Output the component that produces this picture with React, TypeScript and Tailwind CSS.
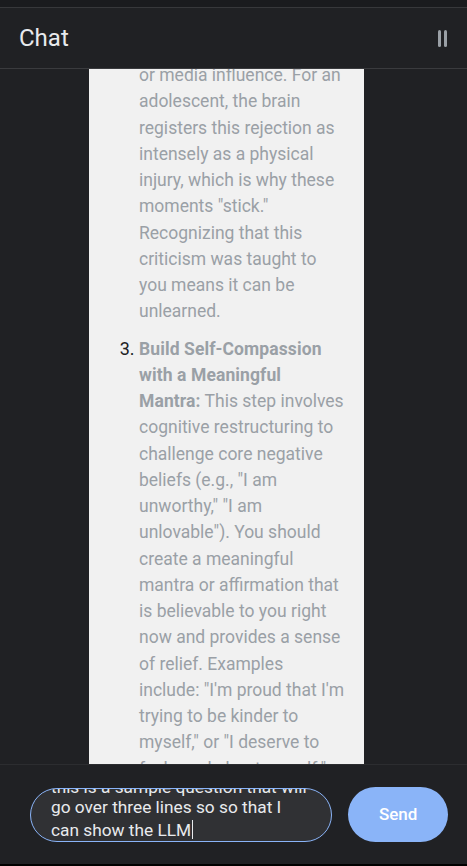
import React from 'react';

export default function App() {
    return (
        <div className="h-[866px] w-full bg-black" style={{ fontFamily: 'Roboto, "Noto Sans", sans-serif' }}>
            <div className="flex h-[864px] flex-col bg-[#202124]">
                {/* Top strip */}
                <div className="h-[8px] shrink-0 border-b border-[#37383b] bg-[#1a1b1e]" />

                {/* Header */}
                <div className="flex h-[61px] shrink-0 items-center justify-between border-b border-[#3a3b3e] pl-[19px] pr-[20px]">
                    <h1 className="text-[24px] font-normal text-[#e8eaed]">Chat</h1>
                    <div className="flex gap-[3px]">
                        <span className="h-[17px] w-[3px] rounded-sm bg-[#9aa0a6]" />
                        <span className="h-[17px] w-[3px] rounded-sm bg-[#9aa0a6]" />
                    </div>
                </div>

                {/* Messages (scrolled) */}
                <div className="min-h-0 flex-1 overflow-hidden">
                    <div className="ml-[89px] w-[275px] bg-[#f1f1f1] pl-[10px] pr-[18px] pb-6 -mt-[113px]">
                        <ol start={2} className="list-decimal pl-[40px] text-[17.5px] leading-[1.5] text-[#9aa0a6] marker:text-[#202124] marker:text-[18px]">
                            <li className="mb-[10px]">
                                <span className="block">
                                    <strong className="font-bold tracking-[0.1px]">Understand the Roots:</strong> Much of
                                    this voice comes from early criticism by parents, teachers, peers,
                                </span>
                                or media influence. For an adolescent, the brain registers this rejection as intensely
                                as a physical injury, which is why these moments "stick." Recognizing that this
                                criticism was taught to you means it can be unlearned.
                            </li>
                            <li className="mb-[10px]">
                                <strong className="font-bold tracking-[0.1px]">Build Self-Compassion with a Meaningful Mantra:</strong>{' '}
                                This step involves cognitive restructuring to challenge core negative beliefs (e.g., "I
                                am unworthy," "I am unlovable"). You should create a meaningful mantra or affirmation
                                that is believable to you right now and provides a sense of relief. Examples include:
                                "I'm proud that I'm trying to be kinder to myself," or "I deserve to feel good about
                                myself."
                            </li>
                            <li className="mb-[10px]">
                                <strong className="font-bold tracking-[0.1px]">Practice Daily:</strong> Repeat your mantra
                                whenever the critical voice shows up, and notice how it slowly loses its power over time.
                            </li>
                        </ol>
                    </div>
                </div>

                {/* Composer */}
                <div className="flex h-[100px] shrink-0 items-center gap-[16px] border-t border-[#2c2d30] pl-[30px] pr-[19px]">
                    <div className="flex h-[54px] w-[303px] flex-col justify-end overflow-hidden rounded-[27px] border border-[#8ab4f8] bg-[#303134] pb-[1px] pl-[20px] pr-[22px]">
                        <p className="text-[17.3px] leading-[20px] text-[#e8eaed]">
                            this is a sample question that will go over three lines so so that I can show the LLM
                            <span className="ml-[1px] inline-block h-[19px] w-[1px] translate-y-[3px] bg-[#e8eaed]" />
                        </p>
                    </div>
                    <button className="flex h-[55px] w-[100px] items-center justify-center rounded-full bg-[#8ab4f8] text-[17px] font-medium text-white">
                        Send
                    </button>
                </div>
            </div>
        </div>
    );
}
